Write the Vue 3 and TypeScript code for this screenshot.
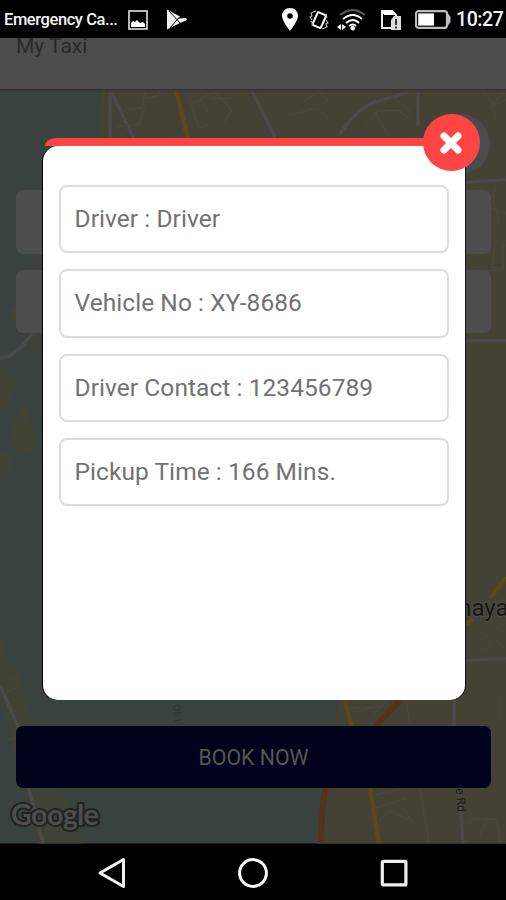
<script setup lang="ts">
interface Detail {
  label: string
  value: string
}

const details: Detail[] = [
  { label: 'Driver', value: 'Driver' },
  { label: 'Vehicle No', value: 'XY-8686' },
  { label: 'Driver Contact', value: '123456789' },
  { label: 'Pickup Time', value: '166 Mins.' },
]
</script>

<template>
  <div class="phone">
    <header class="status">
      <span class="carrier">Emergency Ca...</span>
      <svg class="pic" viewBox="0 0 20 20">
        <rect x="1" y="1" width="18" height="18" fill="none" stroke="#e4e4e4" stroke-width="1.6" />
        <path d="M3 17V13L5 11L7 12L9 10L12 13L15 12L17 14V17Z" fill="#fff" />
      </svg>
      <svg class="play" viewBox="0 0 21 21">
        <path d="M1 0.5L14 7.5L12 9.5L20 9L21 11L14 14L1 20.5Z" fill="#f2f2f2" />
        <path d="M3 2L15 15M4 19L13 8.5" stroke="#000" stroke-width="1" />
      </svg>
      <span class="spacer"></span>
      <svg class="pin" viewBox="0 0 16 23">
        <path fill-rule="evenodd" d="M8 0C3.5 0 0 3.5 0 8C0 13 8 23 8 23C8 23 16 13 16 8C16 3.5 12.5 0 8 0ZM8 5.2A2.8 2.8 0 1 1 8 10.8A2.8 2.8 0 1 1 8 5.2Z" fill="#fff" />
      </svg>
      <svg class="vibrate" viewBox="0 0 20 22" fill="none" stroke="#bbb">
        <rect x="5.8" y="4" width="9" height="14" rx="1" transform="rotate(24 10 11)" stroke="#fff" stroke-width="2" />
        <path d="M7 2L2 4L3 7L1 8L3 11M2 12L4 15L3 17M13 20L18 18L17 15L19 14L17 11M18 9L17 5" stroke-width="1.1" />
      </svg>
      <svg class="wifi" viewBox="0 0 29 22" fill="none">
        <path d="M3 6Q16 -4 28 6" stroke="#555" stroke-width="2.2" />
        <path d="M6 10Q16 2 25 10M9 14Q16 8 22 14M12 17Q16 14 19 17" stroke="#fff" stroke-width="2" />
        <circle cx="15.7" cy="19.3" r="2.3" fill="#fff" />
        <path d="M0 18L4 15V21ZM5 15L9 18L5 21Z" fill="#fff" />
      </svg>
      <svg class="sim" viewBox="0 0 20 20">
        <path d="M1 1H11L15 5V18H1Z" fill="none" stroke="#f1f1f1" stroke-width="2" />
        <path d="M1 1H11L15 5H3V4H1Z" fill="#fff" />
        <path d="M10 10L13 6H20V20H10Z" fill="#ddd" />
        <path d="M15 9V15M15 16.5V18.5" stroke="#333" stroke-width="2" />
      </svg>
      <svg class="battery" viewBox="0 0 36 19">
        <rect x="1" y="1.2" width="31" height="16.6" rx="2.5" fill="#000" stroke="#bdbdbd" stroke-width="2.2" />
        <path d="M33 3.5L35.5 7V12L33 15.5Z" fill="#bdbdbd" />
        <rect x="3.2" y="3.4" width="15.8" height="12.2" fill="#fff" />
      </svg>
      <time class="clock">10:27</time>
    </header>

    <div class="appbar"><span class="title">My Taxi</span></div>

    <main class="content">
      <svg class="map" viewBox="0 90 506 754" fill="none">
        <rect y="90" width="506" height="754" fill="#39423e" />
        <g fill="#444235">
          <path d="M101 90H506V844H317L340 690L250 520L106 200Z" />
          <path d="M0 367L13 371L17 386L8 408L0 412ZM14 424L24 407L34 430L33 452L23 454L11 441ZM0 451L10 455L10 474L0 483ZM27 486L31 481L30 494ZM30 340L39 334L40 356L31 350ZM0 640L5 647L5 656L15 668L34 725L61 789L84 844H37L17 766L8 722L0 704Z" opacity=".8" />
        </g>
        <path d="M101 90H107L104 148H99ZM10 310L18 305V325L12 323ZM11 652L20 686L35 728" fill="#48422f" opacity=".65" />
        <g stroke="#4b494a" stroke-width="3.5">
          <path d="M110 90V140M111 91L134 140M251 90L275 138M339 136Q359 106 379 101L408 93M418 90V126M465 183L506 180M442 341H506M466 661L506 659M454 696V728M459 786L463 844M0 358L9 357L21 348L32 334M0 686L18 727M28 786L43 844" />
        </g>
        <g stroke="#49473b" stroke-width="1.5">
          <path d="M120 112L142 108L145 93M116 127L139 125L145 107M145 99L158 96L160 89M189 98L199 129L208 125M193 104L214 92L232 111L223 124M201 100L208 113M211 99L232 99M289 116L317 108L330 121M303 103L320 91L329 103M365 125L379 111L399 111L412 122M374 112L389 137M391 96L411 113M482 90L494 106L506 100M491 106L497 121M505 91L490 108M495 188L492 209L506 214M492 194L499 222M496 240L492 268L504 269M471 271H503V241M499 247L506 245M345 708H374M352 713L381 706M373 716L388 700M405 696L410 724M420 789L429 844M372 796L402 789M374 809L406 799M379 823L389 811L409 820M402 808L414 824M466 826L475 819L496 820L501 844M487 820L480 836" />
          <path d="M4 682L15 678M7 692L18 688M7 741L19 737M468 637L479 631L490 640V649L476 651M491 632L506 624M495 638L505 650M500 696V724" opacity=".65" />
        </g>
        <path d="M176 90L188 140M490 599L506 578M466 625L473 619M345 701L352 728M370 788L379 844" stroke="#5e481b" stroke-width="4.5" />
        <path d="M400 700L375 728M326 786Q321 813 321 844" stroke="#56311f" stroke-width="6" />
        <text class="place" text-anchor="end" x="508.5" y="616">naya</text>
        <text class="road" transform="translate(456 789) rotate(86)">e Rd</text>
        <text class="sea" transform="translate(173 705) rotate(84)">oLi</text>
        <text class="google" x="11" y="825" textLength="88">Google</text>
      </svg>

      <div class="locate"></div>
      <div class="booking">
        <div class="field"></div>
        <div class="field"></div>
        <button class="book">BOOK NOW</button>
      </div>

      <section class="modal">
        <div class="sheet">
          <div v-for="item in details" :key="item.label" class="detail">
            {{ item.label }} : {{ item.value }}
          </div>
        </div>
        <button class="close" aria-label="Close">
          <svg viewBox="0 0 22 24"><path d="M5 6L17 18M17 6L5 18" stroke="#fff" stroke-width="6" stroke-linecap="round" /></svg>
        </button>
      </section>
    </main>

    <nav class="nav">
      <svg viewBox="0 0 30 32"><path d="M3 16L26.5 2.5V29.5Z" fill="none" stroke="#f2f2f2" stroke-width="3" stroke-linejoin="round" /></svg>
      <svg viewBox="0 0 30 32"><circle cx="15" cy="16" r="13.4" fill="none" stroke="#fff" stroke-width="3" /></svg>
      <svg viewBox="0 0 30 32"><rect x="3.3" y="4.3" width="23.6" height="23.6" rx="1" fill="none" stroke="#eee" stroke-width="3.2" /></svg>
    </nav>
  </div>
</template>

<style>
body {
  margin: 0;
  overflow: hidden;
}
</style>

<style scoped>
.phone {
  width: 506px;
  height: 900px;
  display: flex;
  flex-direction: column;
  overflow: hidden;
  background: #000;
  font-family: Roboto, sans-serif;
}
.status {
  box-sizing: border-box;
  height: 38px;
  flex: none;
  display: flex;
  align-items: center;
  padding: 1px 2px 0 4px;
  background: #000;
  color: #f4f4f4;
}
.status svg {
  flex: none;
}
.carrier {
  width: 124px;
  font-size: 16.5px;
  font-weight: 500;
  line-height: 38px;
  letter-spacing: -0.42px;
  white-space: nowrap;
}
.pic {
  width: 20px;
  height: 20px;
}
.play {
  width: 21px;
  height: 21px;
  margin-left: 18px;
}
.spacer {
  flex: 1;
}
.pin {
  width: 16px;
  height: 23px;
  margin-right: 11px;
}
.vibrate {
  width: 20px;
  height: 22px;
  margin-right: 8px;
}
.wifi {
  width: 29px;
  height: 22px;
  margin-right: 15px;
}
.sim {
  width: 20px;
  height: 20px;
  margin-right: 14px;
}
.battery {
  width: 36px;
  height: 19px;
  margin-right: 5px;
}
.clock {
  width: 48px;
  font-size: 19.5px;
  font-weight: 500;
  line-height: 38px;
  letter-spacing: -0.4px;
  white-space: nowrap;
}
.appbar {
  height: 51px;
  flex: none;
  overflow: hidden;
  background: #4d4d4d;
  color: #292929;
}
.title {
  display: block;
  margin: -4px 0 0 16px;
  font-size: 21px;
  line-height: 24px;
}
.content {
  position: relative;
  height: 755px;
  flex: none;
}
.content::before {
  content: '';
  position: absolute;
  z-index: 1;
  inset: 0 0 auto;
  height: 4px;
  background: linear-gradient(#333, #33333300);
}
.map {
  position: absolute;
  inset: 0;
  width: 506px;
  height: 755px;
}
.place {
  fill: #171717;
  stroke: #514f45;
  stroke-width: 1.5px;
  paint-order: stroke;
  font-size: 24px;
}
.road {
  fill: #191919;
  font-size: 12px;
}
.sea {
  fill: #2d3635;
  font-size: 13px;
}
.google {
  font-family: Lato, sans-serif;
  font-size: 29px;
  font-weight: 700;
  fill: #4d4d4d;
  stroke: #202322;
  stroke-width: 4px;
  paint-order: stroke;
}
.locate {
  position: absolute;
  top: 25px;
  right: 16px;
  width: 60px;
  height: 60px;
  border-radius: 50%;
  background: #4b4b4b;
}
.booking {
  position: relative;
  box-sizing: border-box;
  height: 699px;
  display: flex;
  flex-direction: column;
  gap: 16px;
  padding: 101px 15.5px 0;
}
.field {
  height: 63.5px;
  border-radius: 7px;
  background: #4d4d4d;
}
.book {
  height: 62px;
  margin-top: auto;
  border: 0;
  border-radius: 7px;
  padding: 0 0 0 1px;
  background: #00031b;
  color: #565655;
  font: 400 21.3px Roboto, sans-serif;
}
.modal {
  position: absolute;
  top: 49px;
  left: 42.5px;
  width: 422.5px;
  height: 562px;
}
.modal::before {
  content: '';
  position: absolute;
  inset: 0 0 auto 2px;
  height: 8px;
  border-radius: 12px 12px 0 0 / 8px 8px 0 0;
  background: #ff4444;
}
.sheet {
  position: relative;
  box-sizing: border-box;
  height: 554px;
  top: 8px;
  display: flex;
  flex-direction: column;
  gap: 16px;
  padding: 39px 16px;
  border-radius: 15px;
  background: #fff;
  box-shadow: -1px 0 0 #050505, 1px 0 0 #101010;
}
.detail {
  box-sizing: border-box;
  height: 68.3px;
  flex: none;
  padding-left: 14px;
  border: 2px solid #ddd;
  border-radius: 8px;
  color: #727272;
  font-size: 24.5px;
  line-height: 63px;
  letter-spacing: 0.06px;
  white-space: nowrap;
}
.close {
  position: absolute;
  top: -24px;
  right: -14.5px;
  width: 57px;
  height: 57px;
  display: grid;
  place-items: center;
  border: 0;
  border-radius: 50%;
  padding: 0;
  background: #ff4444;
}
.close svg {
  width: 26px;
  height: 28px;
}
.nav {
  height: 56px;
  display: flex;
  justify-content: space-between;
  align-items: center;
  padding: 2px 97px 0;
}
.nav svg {
  width: 30px;
  height: 32px;
}
</style>
